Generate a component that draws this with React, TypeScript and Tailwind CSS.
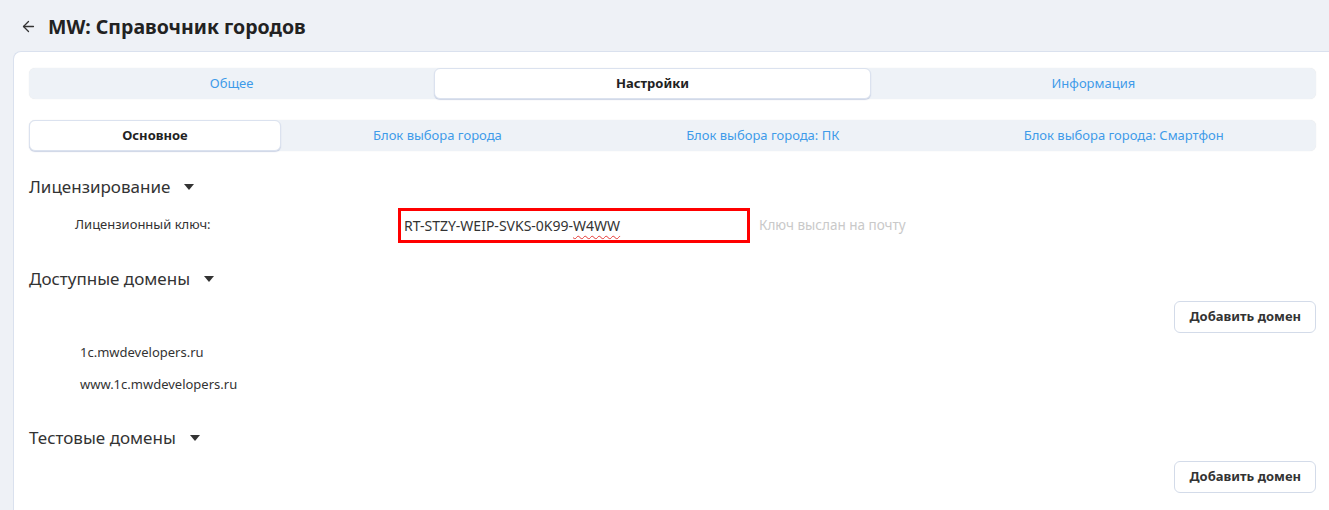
import { ArrowLeft } from 'lucide-react'

const font = { fontFamily: '"Segoe UI", "Noto Sans", "Open Sans", sans-serif' }

function Caret() {
  return (
    <svg width="10" height="6" viewBox="0 0 10 6" className="ml-[14px] mt-[1px]">
      <path d="M0 0h10L5 6z" fill="#333" />
    </svg>
  )
}

function Tabs({ items, active }: { items: string[]; active: number }) {
  return (
    <div className="flex h-[31px] rounded-md bg-[#eef2f7] shadow-[0_0_1px_rgba(0,0,0,0.12)]">
      {items.map((t, i) => (
        <div
          key={t}
          className={
            i === active
              ? 'flex flex-auto items-center justify-center rounded-md border border-[#dbe2ef] bg-white text-[13px] font-bold text-[#222] shadow-[0_1px_1px_rgba(120,140,190,0.35)]'
              : 'flex flex-auto items-center justify-center text-[13px] text-[#3e9be9]'
          }
        >
          {t}
        </div>
      ))}
    </div>
  )
}

function SectionTitle({ children }: { children: string }) {
  return (
    <div className="flex items-center text-[17px] text-[#333]">
      {children}
      <Caret />
    </div>
  )
}

function AddButton() {
  return (
    <div className="flex justify-end">
      <button className="h-[32px] rounded-md border border-[#d3dbe9] bg-white px-[14px] text-[13px] font-bold text-[#333]">
        Добавить домен
      </button>
    </div>
  )
}

export default function App() {
  return (
    <div className="h-[510px] overflow-hidden bg-[#eef1f6]" style={font}>
      {/* Header */}
      <div className="flex h-[51px] items-center pl-[20px] pt-[2px]">
        <ArrowLeft size={17} strokeWidth={1.8} className="text-[#333]" />
        <h1 className="ml-[11px] text-[19.5px] font-bold text-[#222]">MW: Справочник городов</h1>
      </div>

      {/* Card */}
      <div className="ml-[13px] h-[480px] rounded-tl-lg border-l border-t border-[#dae1ee] bg-white pl-[15px] pr-[13px] pt-[16px]">
        <Tabs items={['Общее', 'Настройки', 'Информация']} active={1} />
        <div className="mt-[21px]">
          <Tabs
            items={['Основное', 'Блок выбора города', 'Блок выбора города: ПК', 'Блок выбора города: Смартфон']}
            active={0}
          />
        </div>

        {/* Лицензирование */}
        <div className="mt-[23px]">
          <SectionTitle>Лицензирование</SectionTitle>
        </div>
        <div className="mt-[8px] flex items-center">
          <div className="w-[369px] pl-[46px] text-[13px] text-[#333]">Лицензионный ключ:</div>
          <div className="flex h-[35px] w-[352px] items-center border-[3px] border-[#f00] pl-[3px] text-[14px] text-[#333]">
            RT-STZY-WEIP-SVKS-0K99-
            <span className="underline decoration-[#e53935] decoration-wavy decoration-1 underline-offset-4">W4WW</span>
          </div>
          <div className="ml-[9px] text-[13.5px] text-[#c9c9c9]">Ключ выслан на почту</div>
        </div>

        {/* Доступные домены */}
        <div className="mt-[23px]">
          <SectionTitle>Доступные домены</SectionTitle>
        </div>
        <div className="mt-[10px]">
          <AddButton />
        </div>
        <div className="mt-[10px] pl-[51px] text-[13px] text-[#333]">
          <div className="h-[32px]">1c.mwdevelopers.ru</div>
          <div className="h-[32px]">www.1c.mwdevelopers.ru</div>
        </div>

        {/* Тестовые домены */}
        <div className="mt-[18px]">
          <SectionTitle>Тестовые домены</SectionTitle>
        </div>
        <div className="mt-[10px]">
          <AddButton />
        </div>
      </div>
    </div>
  )
}
